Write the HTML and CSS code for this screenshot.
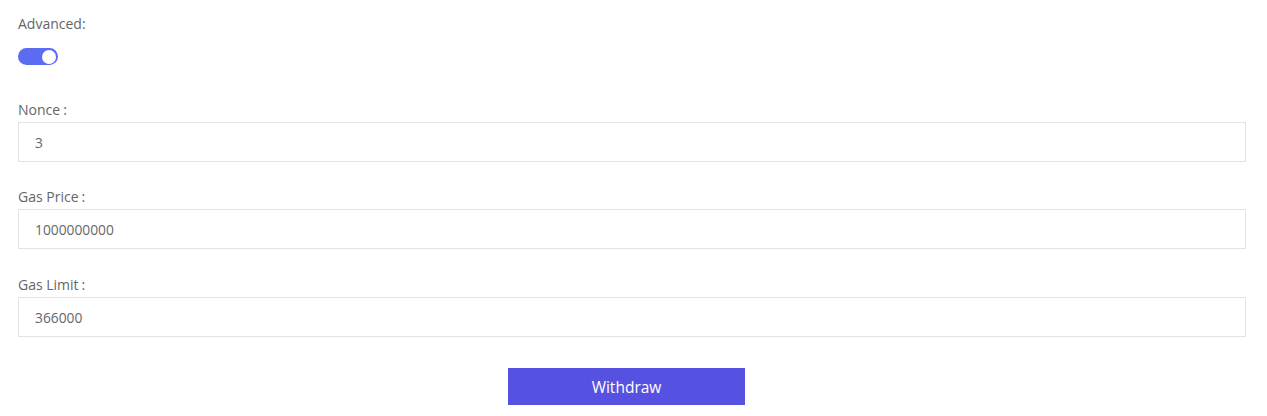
FILE: index.html
```html
<!DOCTYPE html>
<html>
<head>
<meta charset="utf-8">
<link rel="stylesheet" href="styles.css">
</head>
<body>
<div class="form">
  <div class="label adv-label">Advanced:</div>
  <div class="switch on"><span class="knob"></span></div>

  <div class="field">
    <div class="label">Nonce<span class="colon">:</span></div>
    <div class="input">3</div>
  </div>
  <div class="field">
    <div class="label">Gas Price<span class="colon">:</span></div>
    <div class="input">1000000000</div>
  </div>
  <div class="field last">
    <div class="label">Gas Limit<span class="colon">:</span></div>
    <div class="input">366000</div>
  </div>

  <div class="actions">
    <button class="btn">Withdraw</button>
  </div>
</div>
</body>
</html>
```

FILE: styles.css
```css
html, body {
  margin: 0;
  padding: 0;
  background: #ffffff;
}
body {
  font-family: "Open Sans", "Noto Sans", sans-serif;
  color: #666666;
}
.form {
  padding: 14px 21px 0 18px;
}
.label {
  font-size: 14px;
  line-height: 20px;
  height: 20px;
  color: #666666;
  margin-bottom: 2px;
}
.colon {
  margin-left: 3px;
}
.adv-label {
  margin-bottom: 14px;
}
.switch {
  width: 40px;
  height: 17px;
  border-radius: 9px;
  background: #5c6cf2;
  display: flex;
  align-items: center;
  justify-content: flex-end;
  padding: 0 2px;
  box-sizing: border-box;
  margin-bottom: 35px;
}
.knob {
  width: 14px;
  height: 14px;
  border-radius: 50%;
  background: #ffffff;
}
.field {
  margin-bottom: 25px;
}
.field.last {
  padding-top: 1px;
}
.input {
  height: 40px;
  box-sizing: border-box;
  border: 1px solid #e4e4e4;
  padding: 0 16px;
  display: flex;
  align-items: center;
  font-size: 13.8px;
  color: #666666;
}
.actions {
  display: flex;
  justify-content: center;
  padding-right: 11px;
  margin-top: 31px;
}
.btn {
  width: 237px;
  height: 37px;
  border: none;
  background: #5751e1;
  color: #ffffff;
  font-family: "Open Sans", "Noto Sans", sans-serif;
  font-size: 15.5px;
  padding: 0;
  cursor: pointer;
}
```
